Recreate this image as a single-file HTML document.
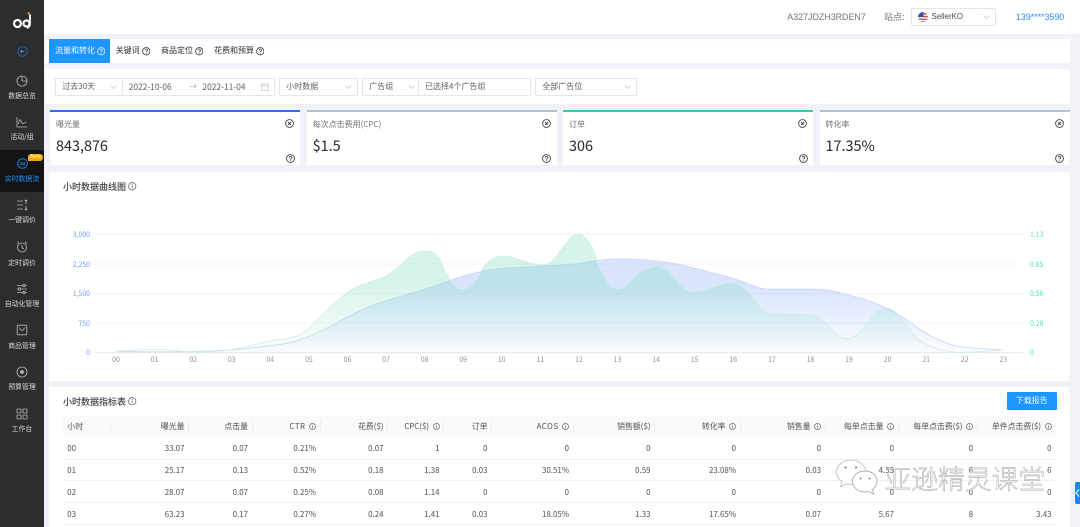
<!DOCTYPE html>
<html lang="zh"><head><meta charset="utf-8"><title>小时数据</title>
<style>
*{box-sizing:border-box;margin:0;padding:0}
html,body{width:1080px;height:527px;overflow:hidden;background:#f0f2f8}
body{font-family:"Noto Sans CJK SC","Liberation Sans",sans-serif;color:#555;font-size:8px;text-shadow:0 0 .4px rgba(0,0,0,.22)}
#r{position:absolute;left:0;top:0;width:1080px;height:527px;overflow:hidden;filter:blur(.33px)}
.a{position:absolute;white-space:nowrap}
.w{position:absolute;background:#fff}
.lb{position:absolute;left:0;width:44px;text-align:center;font-size:6.9px;line-height:10px;color:#d8d8d8;text-shadow:none}
.ic{position:absolute;left:16px;width:12px;height:12px;fill:none;stroke:#b5b5b5;stroke-width:.85}
.box{position:absolute;top:77.5px;height:18px;background:#fff;border:1px solid #e6e6e6;border-radius:1px;line-height:16px;font-size:8px;color:#6e6e6e;padding-left:6px}
.chev{position:absolute;width:7px;height:4px;fill:none;stroke:#c0c0c0;stroke-width:.7}
.card{position:absolute;top:110px;height:55px;width:250px;background:#fff;border-top:2.5px solid #b8bfce}
.card .t1{position:absolute;left:6px;top:7px;font-size:8px;line-height:11px;color:#808080}
.card .v{position:absolute;left:6px;top:24px;font-size:14.4px;line-height:20px;color:#2e2e2e}
.card svg{position:absolute;width:9px;height:9px;color:#444}
.card .x{right:6px;top:7px}.card .q{right:5.5px;top:41.5px}
.yl,.yr,.xl{position:absolute;font-size:6.9px;line-height:8px;text-shadow:none}
.yl{right:calc(1080px - 90px);color:#6f9fff}
.yr{left:1030px;color:#52e0ba}
.xl{top:355px;width:16px;text-align:center;color:#909090}
table{position:absolute;left:63px;top:415.5px;width:993px;border-collapse:collapse;table-layout:fixed;font-size:7.9px;color:#5f5f5f}
th{height:21.8px;background:#fafafa;font-weight:400;text-align:right;padding-right:4.5px;position:relative;color:#5f5f5f}
td{height:21.8px;text-align:right;padding:1px 4.5px 0 0;border-bottom:.7px solid #f0f0f0}
th:first-child,td:first-child{text-align:left;padding-left:4.3px}
th:not(:last-child)::after{content:"";position:absolute;right:0;top:5px;height:11px;border-right:.7px solid #eee}
th svg{width:7px;height:7px;margin-left:3.5px;vertical-align:-1px;color:#555}
.ls{letter-spacing:.45px}
.tq{position:absolute;top:47px;width:8.5px;height:8.5px;color:#444}
</style></head><body>
<div id="r">
<svg width="0" height="0" style="position:absolute"><defs>
<symbol id="q" viewBox="0 0 12 12"><circle cx="6" cy="6" r="5.2" fill="none" stroke="currentColor" stroke-width="1.2"/><path d="M4.300 4.800a1.700 1.700 0 1 1 2.600 1.400c-.6.300-.9.600-.9 1.200" fill="none" stroke="currentColor" stroke-width="1.200"/><circle cx="6" cy="9" r=".7" fill="currentColor"/></symbol>
<symbol id="x" viewBox="0 0 12 12"><circle cx="6" cy="6" r="5.2" fill="none" stroke="currentColor" stroke-width="1.200"/><path d="M4 4l4 4M8 4l-4 4" stroke="currentColor" stroke-width="1.200"/></symbol>
<symbol id="i" viewBox="0 0 12 12"><circle cx="6" cy="6" r="5.200" fill="none" stroke="currentColor" stroke-width="1.100"/><path d="M6 5v4" stroke="currentColor" stroke-width="1.100"/><circle cx="6" cy="3.400" r=".7" fill="currentColor"/></symbol>
<symbol id="c" viewBox="0 0 7 4"><path d="M.5.5L3.500 3.500 6.500.5"/></symbol>
</defs></svg>

<!-- header -->
<div class="w" style="left:44px;top:0;width:1036px;height:34px"></div>
<div class="a" style="left:787.3px;top:11px;font:8.9px/12px 'Liberation Sans',sans-serif;color:#808080">A327JDZH3RDEN7</div>
<div class="a" style="left:884px;top:11px;font-size:9px;line-height:12px;color:#808080">站点:</div>
<div class="a" style="left:911px;top:8px;width:85px;height:18px;border:1px solid #e5e5e5;border-radius:2px;background:#fff"></div>
<svg class="a" style="left:918px;top:11.5px" width="10" height="10" viewBox="0 0 10 10"><defs><clipPath id="fc"><circle cx="5" cy="5" r="5"/></clipPath></defs><g clip-path="url(#fc)"><rect width="10" height="10" fill="#fff"/><path d="M0 1h10v1.400H0zM0 3.800h10v1.400H0zM0 6.600h10V8H0zM0 9h10v1H0z" fill="#e0475a"/><rect width="5.500" height="5" fill="#3a55a8"/></g></svg>
<div class="a" style="left:931.5px;top:11px;font:7.9px/12px 'Liberation Sans',sans-serif;color:#5c5c5c">SellerKO</div>
<svg class="chev" style="left:983px;top:15px"><use href="#c"/></svg>
<div class="a" style="left:1016px;top:10.5px;font:8.9px/12px 'Liberation Sans',sans-serif;color:#3f98ff">139****3590</div>

<!-- tabs -->
<div class="w" style="left:45px;top:39px;width:1025px;height:24px"></div>
<div class="a" style="left:49.3px;top:39.3px;width:61px;height:23.7px;background:#1e96ff"></div>
<div class="a" style="left:55px;top:45px;font-size:8px;line-height:12px;color:#eef7ff;text-shadow:none">流量和转化</div>
<svg class="tq" style="left:96.5px;color:#d5ebff"><use href="#q"/></svg>
<div class="a" style="left:115.7px;top:45px;font-size:8px;line-height:12px;color:#3c3c3c">关键词</div>
<svg class="tq" style="left:141.5px"><use href="#q"/></svg>
<div class="a" style="left:161px;top:45px;font-size:8px;line-height:12px;color:#3c3c3c">商品定位</div>
<svg class="tq" style="left:194.5px"><use href="#q"/></svg>
<div class="a" style="left:214px;top:45px;font-size:8px;line-height:12px;color:#3c3c3c">花费和预算</div>
<svg class="tq" style="left:255.5px"><use href="#q"/></svg>

<!-- filters -->
<div class="w" style="left:45px;top:69px;width:1025px;height:35px"></div>
<div class="box" style="left:55.3px;width:67.5px">过去30天</div>
<svg class="chev" style="left:109.5px;top:85px"><use href="#c"/></svg>
<div class="box" style="left:122px;width:153px"></div>
<div class="a" style="left:128.7px;top:78.5px;font-size:8.4px;line-height:16px;color:#6e6e6e">2022-10-06</div>
<div class="a" style="left:189px;top:78.5px;font-size:8px;line-height:16px;color:#aaa">→</div>
<div class="a" style="left:202.5px;top:78.5px;font-size:8.4px;line-height:16px;color:#6e6e6e">2022-11-04</div>
<svg class="a" style="left:260.5px;top:83px" width="8" height="8" viewBox="0 0 8 8" fill="none" stroke="#c8c8c8" stroke-width=".7"><rect x=".5" y="1" width="7" height="6.500"/><path d="M.5 3h7M2.200 0v1.500M5.800 0v1.500"/></svg>
<div class="box" style="left:279.3px;width:78.5px">小时数据</div>
<svg class="chev" style="left:345px;top:85px"><use href="#c"/></svg>
<div class="box" style="left:362.3px;width:56.5px">广告组</div>
<svg class="chev" style="left:408px;top:85px"><use href="#c"/></svg>
<div class="box" style="left:418px;width:113px">已选择4个广告组</div>
<div class="box" style="left:535.3px;width:101.5px">全部广告位</div>
<svg class="chev" style="left:624px;top:85px"><use href="#c"/></svg>

<!-- metric cards -->
<div class="card" style="left:50px;border-top-color:#2d6ff0"><div class="t1">曝光量</div><div class="v">843,876</div><svg class="x"><use href="#x"/></svg><svg class="q"><use href="#q"/></svg></div>
<div class="card" style="left:306.6px"><div class="t1">每次点击费用(CPC)</div><div class="v">$1.5</div><svg class="x"><use href="#x"/></svg><svg class="q"><use href="#q"/></svg></div>
<div class="card" style="left:563px;border-top-color:#2fd2ab"><div class="t1">订单</div><div class="v">306</div><svg class="x"><use href="#x"/></svg><svg class="q"><use href="#q"/></svg></div>
<div class="card" style="left:819.5px"><div class="t1">转化率</div><div class="v">17.35%</div><svg class="x"><use href="#x"/></svg><svg class="q"><use href="#q"/></svg></div>

<!-- chart card -->
<div class="w" style="left:49.3px;top:172px;width:1020.7px;height:208.7px;border-radius:2px"></div>
<div class="a" style="left:63px;top:180px;font-size:9px;line-height:13px;color:#4a4a4a;font-weight:500">小时数据曲线图</div>
<svg class="a" style="left:128px;top:182px;width:8.5px;height:8.5px;color:#666"><use href="#i"/></svg>
<svg class="a" style="left:0;top:0" width="1080" height="527">
<defs>
<linearGradient id="gg" gradientUnits="userSpaceOnUse" x1="0" y1="234" x2="0" y2="354"><stop offset="0" stop-color="#7fdcc0" stop-opacity=".33"/><stop offset=".4" stop-color="#7fdcc0" stop-opacity=".31"/><stop offset="1" stop-color="#7fdcc0" stop-opacity=".02"/></linearGradient>
<linearGradient id="gb" gradientUnits="userSpaceOnUse" x1="0" y1="234" x2="0" y2="354"><stop offset="0" stop-color="#8eaffa" stop-opacity=".35"/><stop offset=".45" stop-color="#8eaffa" stop-opacity=".33"/><stop offset="1" stop-color="#8eaffa" stop-opacity=".02"/></linearGradient>
</defs>
<g stroke="#f2f3f5" stroke-width="1"><path d="M97 234H1022.700M97 264H1022.700M97 293.700H1022.700M97 323H1022.700"/></g>
<path d="M97 352.600H1022.700" stroke="#e6e8ec" stroke-width="1"/>
<path fill="url(#gb)" stroke="none" d="M116 351.5L135 351.6Q154 351.8 173.5 351.75Q193 351.7 212.5 350.85Q232 350 251 347.85Q270 345.7 280 344.35Q290 343 299.5 339.85Q309 336.7 319.5 331.7Q330 326.7 338.5 322Q347 317.3 357 312.15Q367 307 376.5 303.85Q386 300.7 395.5 297.85Q405 295 415 292.15Q425 289.3 434 286.15Q443 283 453 279.5Q463 276 473 273.35Q483 270.7 492.5 269.5Q502 268.3 521 267.15Q540 266 559.5 265Q579 264 588.5 262Q598 260 608 259.35Q618 258.7 627.5 259Q637 259.3 646.5 260.15Q656 261 665.5 262.15Q675 263.3 685 265.8Q695 268.3 714 273.3Q733 278.3 740 280.8Q747 283.3 753.5 286Q760 288.7 766 289Q772 289.3 791.5 289.15Q811 289 819 289.25Q827 289.5 838 292.25Q849 295 858.5 297.5Q868 300 878 304.5Q888 309 896.5 313.65Q905 318.3 915.5 326.15Q926 334 938 339.5Q950 345 957.5 346.35Q965 347.7 984 348.85L1003 350V352.6H116Z"/>
<path fill="none" stroke="#c3d5fb" stroke-width=".8" d="M116 351.5L135 351.6Q154 351.8 173.5 351.75Q193 351.7 212.5 350.85Q232 350 251 347.85Q270 345.7 280 344.35Q290 343 299.5 339.85Q309 336.7 319.5 331.7Q330 326.7 338.5 322Q347 317.3 357 312.15Q367 307 376.5 303.85Q386 300.7 395.5 297.85Q405 295 415 292.15Q425 289.3 434 286.15Q443 283 453 279.5Q463 276 473 273.35Q483 270.7 492.5 269.5Q502 268.3 521 267.15Q540 266 559.5 265Q579 264 588.5 262Q598 260 608 259.35Q618 258.7 627.5 259Q637 259.3 646.5 260.15Q656 261 665.5 262.15Q675 263.3 685 265.8Q695 268.3 714 273.3Q733 278.3 740 280.8Q747 283.3 753.5 286Q760 288.7 766 289Q772 289.3 791.5 289.15Q811 289 819 289.25Q827 289.5 838 292.25Q849 295 858.5 297.5Q868 300 878 304.5Q888 309 896.5 313.65Q905 318.3 915.5 326.15Q926 334 938 339.5Q950 345 957.5 346.35Q965 347.7 984 348.85L1003 350"/>
<path fill="url(#gg)" stroke="none" d="M116 351.3L125.5 350.75Q135 350.2 144.5 349.6Q154 349 162 349.5Q170 350 181.5 351.3Q193 352.6 202.5 352.15Q212 351.7 222 350.7Q232 349.7 241 347.85Q250 346 260 343.35Q270 340.7 276.5 339.85Q283 339 290 338Q297 337 303 333Q309 329 319.5 318Q330 307 338.5 299.5Q347 292 355 288Q363 284 374.5 280.5Q386 277 393 271.5Q400 266 406 260Q412 254 418.5 252Q425 250 431 251.5Q437 253 442 264.5Q447 276 451.5 282Q456 288 461.5 289Q467 290 472 285Q477 280 481 271.5Q485 263 493.5 258.5Q502 254 512.5 257.5Q523 261 531.5 263.5Q540 266 546 264.5Q552 263 558.5 253.5Q565 244 569.5 239Q574 234 578.5 234Q583 234 587.5 240Q592 246 596.5 259Q601 272 606.5 280.5Q612 289 617 289Q622 289 631 280.5Q640 272 648 268Q656 264 662 267Q668 270 675.5 279.5Q683 289 689 291Q695 293 704 290Q713 287 723 284Q733 281 740.5 285.5Q748 290 755.5 300.5Q763 311 767.5 312.5Q772 314 791.5 314Q811 314 817 316.5Q823 319 830 327.5Q837 336 843 338Q849 340 855.5 336Q862 332 867.5 322.5Q873 313 880.5 309.5Q888 306 895.5 312Q903 318 908 327Q913 336 919.5 340.5Q926 345 936.5 348.5Q947 352 956 352.3Q965 352.6 984 351.3L1003 350V352.6H116Z"/>
<path fill="none" stroke="#cfeee7" stroke-width=".8" d="M116 351.3L125.5 350.75Q135 350.2 144.5 349.6Q154 349 162 349.5Q170 350 181.5 351.3Q193 352.6 202.5 352.15Q212 351.7 222 350.7Q232 349.7 241 347.85Q250 346 260 343.35Q270 340.7 276.5 339.85Q283 339 290 338Q297 337 303 333Q309 329 319.5 318Q330 307 338.5 299.5Q347 292 355 288Q363 284 374.5 280.5Q386 277 393 271.5Q400 266 406 260Q412 254 418.5 252Q425 250 431 251.5Q437 253 442 264.5Q447 276 451.5 282Q456 288 461.5 289Q467 290 472 285Q477 280 481 271.5Q485 263 493.5 258.5Q502 254 512.5 257.5Q523 261 531.5 263.5Q540 266 546 264.5Q552 263 558.5 253.5Q565 244 569.5 239Q574 234 578.5 234Q583 234 587.5 240Q592 246 596.5 259Q601 272 606.5 280.5Q612 289 617 289Q622 289 631 280.5Q640 272 648 268Q656 264 662 267Q668 270 675.5 279.5Q683 289 689 291Q695 293 704 290Q713 287 723 284Q733 281 740.5 285.5Q748 290 755.5 300.5Q763 311 767.5 312.5Q772 314 791.5 314Q811 314 817 316.5Q823 319 830 327.5Q837 336 843 338Q849 340 855.5 336Q862 332 867.5 322.5Q873 313 880.5 309.5Q888 306 895.5 312Q903 318 908 327Q913 336 919.5 340.5Q926 345 936.5 348.5Q947 352 956 352.3Q965 352.6 984 351.3L1003 350"/>
</svg>
<div class="yl" style="top:230px">3,000</div><div class="yl" style="top:259.5px">2,250</div><div class="yl" style="top:289px">1,500</div><div class="yl" style="top:318.5px">750</div><div class="yl" style="top:348px">0</div>
<div class="yr" style="top:230px">1.13</div><div class="yr" style="top:259.5px">0.85</div><div class="yr" style="top:289px">0.56</div><div class="yr" style="top:318.5px">0.28</div><div class="yr" style="top:348px">0</div>
<div class="xl" style="left:108px">00</div><div class="xl" style="left:146.6px">01</div><div class="xl" style="left:185.2px">02</div><div class="xl" style="left:223.7px">03</div><div class="xl" style="left:262.3px">04</div><div class="xl" style="left:300.9px">05</div><div class="xl" style="left:339.5px">06</div><div class="xl" style="left:378px">07</div><div class="xl" style="left:416.6px">08</div><div class="xl" style="left:455.2px">09</div><div class="xl" style="left:493.8px">10</div><div class="xl" style="left:532.4px">11</div><div class="xl" style="left:571px">12</div><div class="xl" style="left:609.5px">13</div><div class="xl" style="left:648.1px">14</div><div class="xl" style="left:686.7px">15</div><div class="xl" style="left:725.3px">16</div><div class="xl" style="left:763.9px">17</div><div class="xl" style="left:802.4px">18</div><div class="xl" style="left:841px">19</div><div class="xl" style="left:879.6px">20</div><div class="xl" style="left:918.2px">21</div><div class="xl" style="left:956.8px">22</div><div class="xl" style="left:995.3px">23</div>

<!-- table card -->
<div class="w" style="left:49.3px;top:386.5px;width:1020.7px;height:141px;border-radius:2px"></div>
<div class="a" style="left:63px;top:394.5px;font-size:9px;line-height:13px;color:#4a4a4a;font-weight:500">小时数据指标表</div>
<svg class="a" style="left:128px;top:396.5px;width:8.5px;height:8.5px;color:#666"><use href="#i"/></svg>
<div class="a" style="left:1007px;top:392px;width:49.5px;height:18px;background:#1e96ff;border-radius:1px;color:#eef7ff;font-size:8px;line-height:18px;text-align:center;text-shadow:none">下载报告</div>
<table>
<colgroup><col style="width:48px"><col style="width:78px"><col style="width:63.5px"><col style="width:68px"><col style="width:67.5px"><col style="width:56px"><col style="width:48px"><col style="width:81.5px"><col style="width:81.5px"><col style="width:85.5px"><col style="width:85px"><col style="width:73px"><col style="width:79px"><col style="width:78.5px"></colgroup>
<tr><th>小时</th><th>曝光量</th><th>点击量</th><th><span class="ls">CTR</span><svg><use href="#i"/></svg></th><th>花费($)</th><th>CPC($)<svg><use href="#i"/></svg></th><th>订单</th><th><span class="ls">ACOS</span><svg><use href="#i"/></svg></th><th>销售额($)</th><th>转化率<svg><use href="#i"/></svg></th><th>销售量<svg><use href="#i"/></svg></th><th>每单点击量<svg><use href="#i"/></svg></th><th>每单点击费($)<svg><use href="#i"/></svg></th><th>单件点击费($)<svg><use href="#i"/></svg></th></tr>
<tr><td>00</td><td>33.07</td><td>0.07</td><td>0.21%</td><td>0.07</td><td>1</td><td>0</td><td>0</td><td>0</td><td>0</td><td>0</td><td>0</td><td>0</td><td>0</td></tr>
<tr><td>01</td><td>25.17</td><td>0.13</td><td>0.52%</td><td>0.18</td><td>1.38</td><td>0.03</td><td>30.51%</td><td>0.59</td><td>23.08%</td><td>0.03</td><td>4.33</td><td>6</td><td>6</td></tr>
<tr><td>02</td><td>28.07</td><td>0.07</td><td>0.25%</td><td>0.08</td><td>1.14</td><td>0</td><td>0</td><td>0</td><td>0</td><td>0</td><td>0</td><td>0</td><td>0</td></tr>
<tr><td>03</td><td>63.23</td><td>0.17</td><td>0.27%</td><td>0.24</td><td>1.41</td><td>0.03</td><td>18.05%</td><td>1.33</td><td>17.65%</td><td>0.07</td><td>5.67</td><td>8</td><td>3.43</td></tr>
</table>

<!-- watermark -->
<svg class="a" style="left:835px;top:458px" width="46" height="38" viewBox="0 0 46 38"><path d="M16 2C8 2 1.500 7.500 1.500 14c0 4 2.300 7.300 5.500 9.500L5.500 29l6-3.200c1.500.5 3 .7 4.500.7 8 0 14.500-5.500 14.500-12.500S24 2 16 2z" fill="#fff" stroke="#bbb" stroke-width=".8"/><path d="M30 13c-7 0-12.500 4.700-12.500 10.500S23 34 30 34c1.300 0 2.500-.2 3.700-.5l5 2.700-1.300-4.500c2.700-2 4.600-5 4.600-8.200C42 17.700 37 13 30 13z" fill="#fff" stroke="#aaa" stroke-width=".9"/><circle cx="10.500" cy="9.500" r="1.100" fill="#888"/><circle cx="21" cy="9.500" r="1.100" fill="#888"/><circle cx="25.500" cy="20.500" r="1" fill="#888"/><circle cx="34.500" cy="20.500" r="1" fill="#888"/></svg>
<div class="a" style="left:884.5px;top:461px;font-size:26.8px;line-height:34px;color:#fff;-webkit-text-stroke:.45px #9a9a9a;font-weight:300;text-shadow:none">亚逊精灵课堂</div>

<!-- side tab -->
<div class="a" style="left:1074.5px;top:482px;width:5.5px;height:22px;background:#1e88f0;border-radius:2px 0 0 2px"></div>
<svg class="a" style="left:1075px;top:489px" width="5" height="8" viewBox="0 0 5 8" fill="none" stroke="#fff" stroke-width="1"><path d="M4 .5L1 4l3 3.500"/></svg>

<!-- sidebar -->
<div class="a" style="left:0;top:0;width:44px;height:527px;background:#2d2d2d"></div>
<svg class="a" style="left:0;top:0" width="44" height="40" viewBox="0 0 44 40" fill="none"><circle cx="17.500" cy="23.500" r="3.500" stroke="#fff" stroke-width="2.200"/><circle cx="26.500" cy="23.500" r="3" stroke="#fff" stroke-width="2.200"/><path d="M30 14.500v9c0 2-1 3.800-3 4.600" stroke="#fff" stroke-width="1.800"/><circle cx="28.700" cy="13.300" r="1.200" fill="#e29a3a"/></svg>
<svg class="a" style="left:16.500px;top:45.500px" width="11" height="11" viewBox="0 0 11 11" fill="none" stroke="#1a6fc2" stroke-width=".9"><circle cx="5.500" cy="5.500" r="4.700"/><path d="M7.500 5.500H3.500M5 4L3.500 5.500 5 7" stroke="#3f8fdc"/></svg>

<svg class="ic" style="top:74.500px;height:12px"><circle cx="6" cy="6" r="5"/><path d="M6 1v5h5"/></svg>
<div class="lb" style="top:90px">数据总览</div>
<svg class="ic" style="top:116px"><path d="M1 1v10h10M2.500 8c1-5 1.500-5 2.500-3s1.200 3 2.500 2.500S9.500 6 10.500 6"/></svg>
<div class="lb" style="top:131px">活动/组</div>

<div class="a" style="left:0;top:150px;width:44px;height:42px;background:#141414"></div>
<svg class="a" style="left:16.500px;top:157.500px" width="11" height="11" viewBox="0 0 11 11" fill="none"><circle cx="5.500" cy="5.500" r="4.800" stroke="#1a7fe0" stroke-width="1"/><text x="5.500" y="7.200" text-anchor="middle" font-size="4.500" fill="#3f98ee" font-family="Liberation Sans" font-weight="700">24</text></svg>
<div class="a" style="left:28px;top:153.500px;width:15px;height:7px;background:#f2a61f;border-radius:3px 3px 3px 0;color:#fff3d8;font:5px/7px 'Liberation Sans',sans-serif;text-align:center;text-shadow:none">Beta</div>
<div class="lb" style="top:173px;color:#1e90ff">实时数据流</div>

<svg class="ic" style="top:199px"><path d="M1 2h6M1 6h6M1 10h6M10 1v4M8.800 2.200L10 1l1.200 1.200M10 7v4M8.800 9.800L10 11l1.200-1.200"/></svg>
<div class="lb" style="top:214px">一键调价</div>
<svg class="ic" style="top:241px"><circle cx="6" cy="6.500" r="4.500"/><path d="M6 4v2.800l2 1M1 2.500L3 1M11 2.500L9 1"/></svg>
<div class="lb" style="top:257px">定时调价</div>
<svg class="ic" style="top:283px"><path d="M1 2.500h10M1 6h10M1 9.500h10"/><circle cx="8" cy="2.500" r="1.200" fill="#2d2d2d"/><circle cx="3.500" cy="6" r="1.200" fill="#2d2d2d"/><circle cx="8" cy="9.500" r="1.200" fill="#2d2d2d"/></svg>
<div class="lb" style="top:298px">自动化管理</div>
<svg class="ic" style="top:324px"><rect x="1.200" y="1.200" width="9.600" height="9.600" rx="1"/><path d="M3.500 3.500c.5 2 1.500 2.800 2.500 2.800s2-.8 2.500-2.800"/></svg>
<div class="lb" style="top:340px">商品管理</div>
<svg class="ic" style="top:366px"><circle cx="6" cy="6" r="5"/><circle cx="6" cy="6" r="1.500" fill="#b5b5b5"/></svg>
<div class="lb" style="top:381px">预算管理</div>
<svg class="ic" style="top:407.500px"><rect x="1" y="1" width="4" height="4" rx=".5"/><rect x="7" y="1" width="4" height="4" rx=".5"/><rect x="1" y="7" width="4" height="4" rx=".5"/><rect x="7" y="7" width="4" height="4" rx=".5"/></svg>
<div class="lb" style="top:423px">工作台</div>
</div>
</body></html>
